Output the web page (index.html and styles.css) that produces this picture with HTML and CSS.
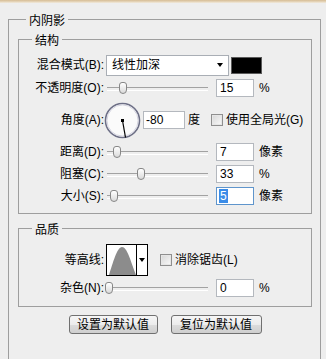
FILE: index.html
```html
<!DOCTYPE html>
<html lang="zh">
<head>
<meta charset="utf-8">
<title>内阴影</title>
<link rel="stylesheet" href="styles.css">
</head>
<body>
<div class="topbar"></div>
<section class="group outer">
  <div class="group-head"><span class="group-title">内阴影</span></div>
  <div class="group-body outer-body">
    <section class="group inner">
      <div class="group-head"><span class="group-title">结构</span></div>
      <div class="group-body inner-body struct-body">
        <div class="row row-blend">
          <span class="lbl">混合模式(B):</span>
          <div class="select"><span class="select-text">线性加深</span><span class="caret"></span></div>
          <span class="swatch"></span>
        </div>
        <div class="row">
          <span class="lbl">不透明度(O):</span>
          <div class="slider"><span class="knob" style="left:14px"></span></div>
          <span class="field">15</span><span class="unit">%</span>
        </div>
        <div class="row row-angle">
          <span class="lbl">角度(A):</span>
          <svg class="dial" width="37" height="37" viewBox="0 0 37 37">
            <circle cx="18.5" cy="18.5" r="17" fill="#fbfbfb" stroke="#6d6f86" stroke-width="1.6"/>
            <circle cx="18.5" cy="18.5" r="15.6" fill="none" stroke="#d4d4e0" stroke-width="1"/>
            <line x1="18.5" y1="18.5" x2="21.5" y2="35.5" stroke="#000" stroke-width="1.2"/>
            <rect x="17" y="17" width="3" height="3" fill="#000"/>
          </svg>
          <span class="field field-angle">-80</span><span class="unit unit-deg">度</span>
          <span class="check check-global"></span><span class="check-label">使用全局光(G)</span>
        </div>
        <div class="row">
          <span class="lbl">距离(D):</span>
          <div class="slider"><span class="knob" style="left:8px"></span></div>
          <span class="field">7</span><span class="unit">像素</span>
        </div>
        <div class="row">
          <span class="lbl">阻塞(C):</span>
          <div class="slider"><span class="knob" style="left:32px"></span></div>
          <span class="field">33</span><span class="unit">%</span>
        </div>
        <div class="row">
          <span class="lbl">大小(S):</span>
          <div class="slider"><span class="knob" style="left:5px"></span></div>
          <span class="field field-focus"><span class="sel">5</span></span><span class="unit">像素</span>
        </div>
      </div>
    </section>
    <section class="group inner quality">
      <div class="group-head"><span class="group-title">品质</span></div>
      <div class="group-body inner-body quality-body">
        <div class="row row-contour">
          <span class="lbl">等高线:</span>
          <div class="contour">
            <svg class="contour-graph" width="29" height="30" viewBox="0 0 29 30">
              <rect width="29" height="30" fill="#fff"/>
              <path d="M2 30 C6 18 10 2 15 2 C20 2 23 14 29 30 Z" fill="#8c8c8c"/>
            </svg>
            <span class="contour-drop"><span class="caret"></span></span>
          </div>
          <span class="check check-aa"></span><span class="check-label">消除锯齿(L)</span>
        </div>
        <div class="row">
          <span class="lbl">杂色(N):</span>
          <div class="slider"><span class="knob" style="left:0px"></span></div>
          <span class="field">0</span><span class="unit">%</span>
        </div>
      </div>
    </section>
    <div class="buttons">
      <button class="btn btn-a" type="button">设置为默认值</button>
      <button class="btn btn-b" type="button">复位为默认值</button>
    </div>
  </div>
</section>
</body>
</html>
```
FILE: styles.css
```css
* { box-sizing: border-box; }

html, body {
  margin: 0;
  height: 359px;
  overflow: hidden;
}

body {
  display: flex;
  flex-direction: column;
  background: #eeeeee;
  color: #000;
  font: 12px/14px "Liberation Sans", "Noto Sans CJK SC", sans-serif;
}

.topbar {
  flex: none;
  height: 3px;
  background: linear-gradient(#d6bc94, #e6d6bc 60%, #f2ebdf);
}

/* group box: head row draws the top border around the title */
.group {
  display: flex;
  flex-direction: column;
}

.group-head {
  display: flex;
  height: 14px;
  flex: none;
}

.group-head::before,
.group-head::after {
  content: "";
  align-self: flex-end;
  height: 8px;
  border-top: 1px solid #9e9e9e;
}

.group-head::before {
  border-left: 1px solid #9e9e9e;
}

.group-head::after {
  flex: 1;
  border-right: 1px solid #9e9e9e;
}

.group-title {
  padding: 0 3px;
  line-height: 14px;
}

.group-body {
  border: 1px solid #9e9e9e;
  border-top: none;
}

.outer {
  flex: 1;
  margin: 11px 0 0 8px;
  width: 313px;
}

.outer > .group-head::before { width: 17px; }

.outer-body {
  flex: 1;
  border-bottom: none;
  padding: 6px 8px 0 9px;
}

.inner {
  width: 294px;
}

.inner > .group-head::before { width: 13px; }

.inner-body {
  display: flex;
  flex-direction: column;
  gap: 2px;
}

.struct-body { padding: 6px 0 7px 0; }

.quality { margin-top: 9px; }

.quality-body { padding: 7px 0 8px 0; }

.row {
  display: flex;
  align-items: center;
  height: 20px;
}

.row-blend { height: 22px; }
.row-angle { height: 40px; }
.row-contour { height: 32px; }

.lbl {
  width: 85px;
  text-align: right;
  flex: none;
}

.select {
  margin-left: 2px;
  width: 123px;
  height: 21px;
  background: #fff;
  border: 1px solid #a9aeb5;
  display: flex;
  align-items: center;
  padding-left: 5px;
}

.select-text { flex: 1; }

.caret {
  width: 0;
  height: 0;
  border-left: 3.5px solid transparent;
  border-right: 3.5px solid transparent;
  border-top: 4px solid #000;
  margin-right: 5px;
}

.swatch {
  margin-left: 2px;
  width: 31px;
  height: 17px;
  background: #000;
  border: 1px solid #5a5a5a;
}

.slider {
  position: relative;
  margin-left: 1px;
  width: 103px;
  height: 12px;
  flex: none;
}

.slider::before {
  content: "";
  position: absolute;
  left: 2px;
  right: 0;
  top: 5px;
  height: 2px;
  border-top: 1px solid #a2a2a2;
  border-bottom: 1px solid #ffffff;
}

.knob {
  position: absolute;
  top: 0;
  width: 8px;
  height: 12px;
  border: 1px solid #878787;
  border-radius: 3px 3px 4px 4px;
  background: linear-gradient(#ffffff, #dadada);
}

.field {
  margin-left: 8px;
  width: 38px;
  height: 18px;
  background: #fff;
  border: 1px solid #b4b8be;
  padding-left: 3px;
  line-height: 16px;
  flex: none;
}

.field-angle {
  margin-left: 2px;
  width: 42px;
  padding-left: 2px;
}

.field-focus { border-color: #5f95cc; padding-left: 2px; }

.sel {
  background: #3a8ce8;
  color: #fff;
  padding: 0 1px;
}

.unit { margin-left: 5px; }
.unit-deg { margin-left: 3px; }

.dial { flex: none; }

.check {
  width: 12px;
  height: 12px;
  border: 1px solid #8f8f8f;
  background: linear-gradient(135deg, #d6d6d6, #fafafa);
  box-shadow: inset 0 0 0 1px #e6e6e6;
  flex: none;
}

.check-global { margin-left: 11px; }
.check-aa { margin-left: 12px; }

.check-label { margin-left: 3px; }

.contour {
  margin-left: 2px;
  width: 42px;
  height: 32px;
  border: 1px solid #000;
  display: flex;
  background: #fff;
  flex: none;
}

.contour-graph { display: block; }

.contour-drop {
  flex: 1;
  border-left: 1px solid #000;
  display: flex;
  align-items: center;
  justify-content: center;
  background: #fff;
}

.contour-drop .caret { margin-right: 0; }

.buttons {
  display: flex;
  justify-content: center;
  gap: 13px;
  margin-top: 8px;
}

.btn {
  height: 19px;
  padding: 0;
  font: inherit;
  color: #000;
  border: 1px solid #707070;
  border-radius: 3px;
  background: linear-gradient(#f6f6f6, #ececec 50%, #dcdcdc 51%, #cfcfcf);
}

.btn-a { width: 89px; }
.btn-b { width: 91px; }
```
